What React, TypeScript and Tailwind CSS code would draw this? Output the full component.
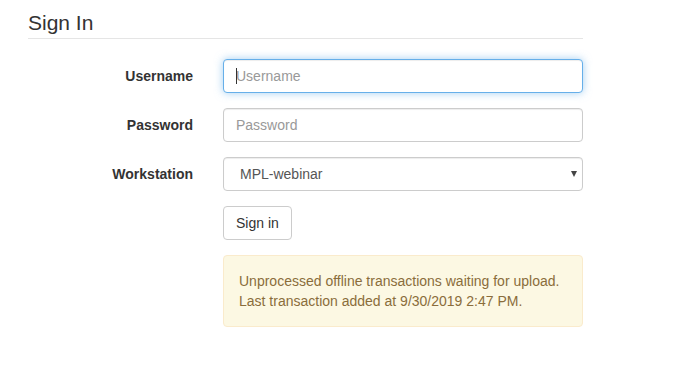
import React from 'react';

const labelCls = 'w-[165px] shrink-0 text-right text-[14px] font-bold text-[#333]';
const baseInput =
  'w-[360px] h-[34px] rounded-[4px] border bg-white px-[12px] text-[14px] text-[#555] placeholder:text-[#999] outline-none';
const inputCls = `${baseInput} border-[#ccc] shadow-[inset_0_1px_1px_rgba(0,0,0,0.075)]`;
const focusedCls = `${baseInput} border-[#66afe9] shadow-[inset_0_1px_1px_rgba(0,0,0,0.075),0_0_8px_rgba(102,175,233,0.6)]`;

const App: React.FC = () => {
  return (
    <div className="min-h-[366px] w-[677px] bg-white font-['Liberation_Sans',Arial,sans-serif] text-[14px] leading-[20px] text-[#333]">
      <div className="w-[555px] ml-[28px] pt-[8px]">
        <div className="h-[31px] border-b border-[#e5e5e5] text-[21px] leading-[30px] text-[#333]">Sign In</div>

        <form className="mt-[20px] flex flex-col gap-[15px]" onSubmit={(e) => e.preventDefault()}>
          <div className="flex items-center gap-[30px]">
            <label className={labelCls}>Username</label>
            <div className="relative">
              <input placeholder="Username" className={focusedCls} />
              {/* text caret */}
              <span className="pointer-events-none absolute left-[13px] top-[9px] h-[16px] w-px bg-[#333]" />
            </div>
          </div>

          <div className="flex items-center gap-[30px]">
            <label className={labelCls}>Password</label>
            <input type="password" placeholder="Password" className={inputCls} />
          </div>

          <div className="flex items-center gap-[30px]">
            <label className={labelCls}>Workstation</label>
            <div className="relative">
              <select className={`${inputCls} appearance-none pl-[16px]`} defaultValue="MPL-webinar">
                <option>MPL-webinar</option>
              </select>
              <span className="pointer-events-none absolute right-[6px] top-[14px] h-0 w-0 border-x-[3.5px] border-t-[6px] border-x-transparent border-t-[#444]" />
            </div>
          </div>

          <div className="flex items-center gap-[30px]">
            <div className="w-[165px] shrink-0" />
            <button
              type="submit"
              className="h-[34px] rounded-[4px] border border-[#ccc] bg-white px-[12px] text-[14px] text-[#333]"
            >
              Sign in
            </button>
          </div>

          <div className="flex gap-[30px]">
            <div className="w-[165px] shrink-0" />
            <div className="w-[360px] rounded-[4px] border border-[#faebcc] bg-[#fcf8e3] p-[15px] text-[#8a6d3b]">
              <div>Unprocessed offline transactions waiting for upload.</div>
              <div>Last transaction added at 9/30/2019 2:47 PM.</div>
            </div>
          </div>
        </form>
      </div>
    </div>
  );
};

export default App;
